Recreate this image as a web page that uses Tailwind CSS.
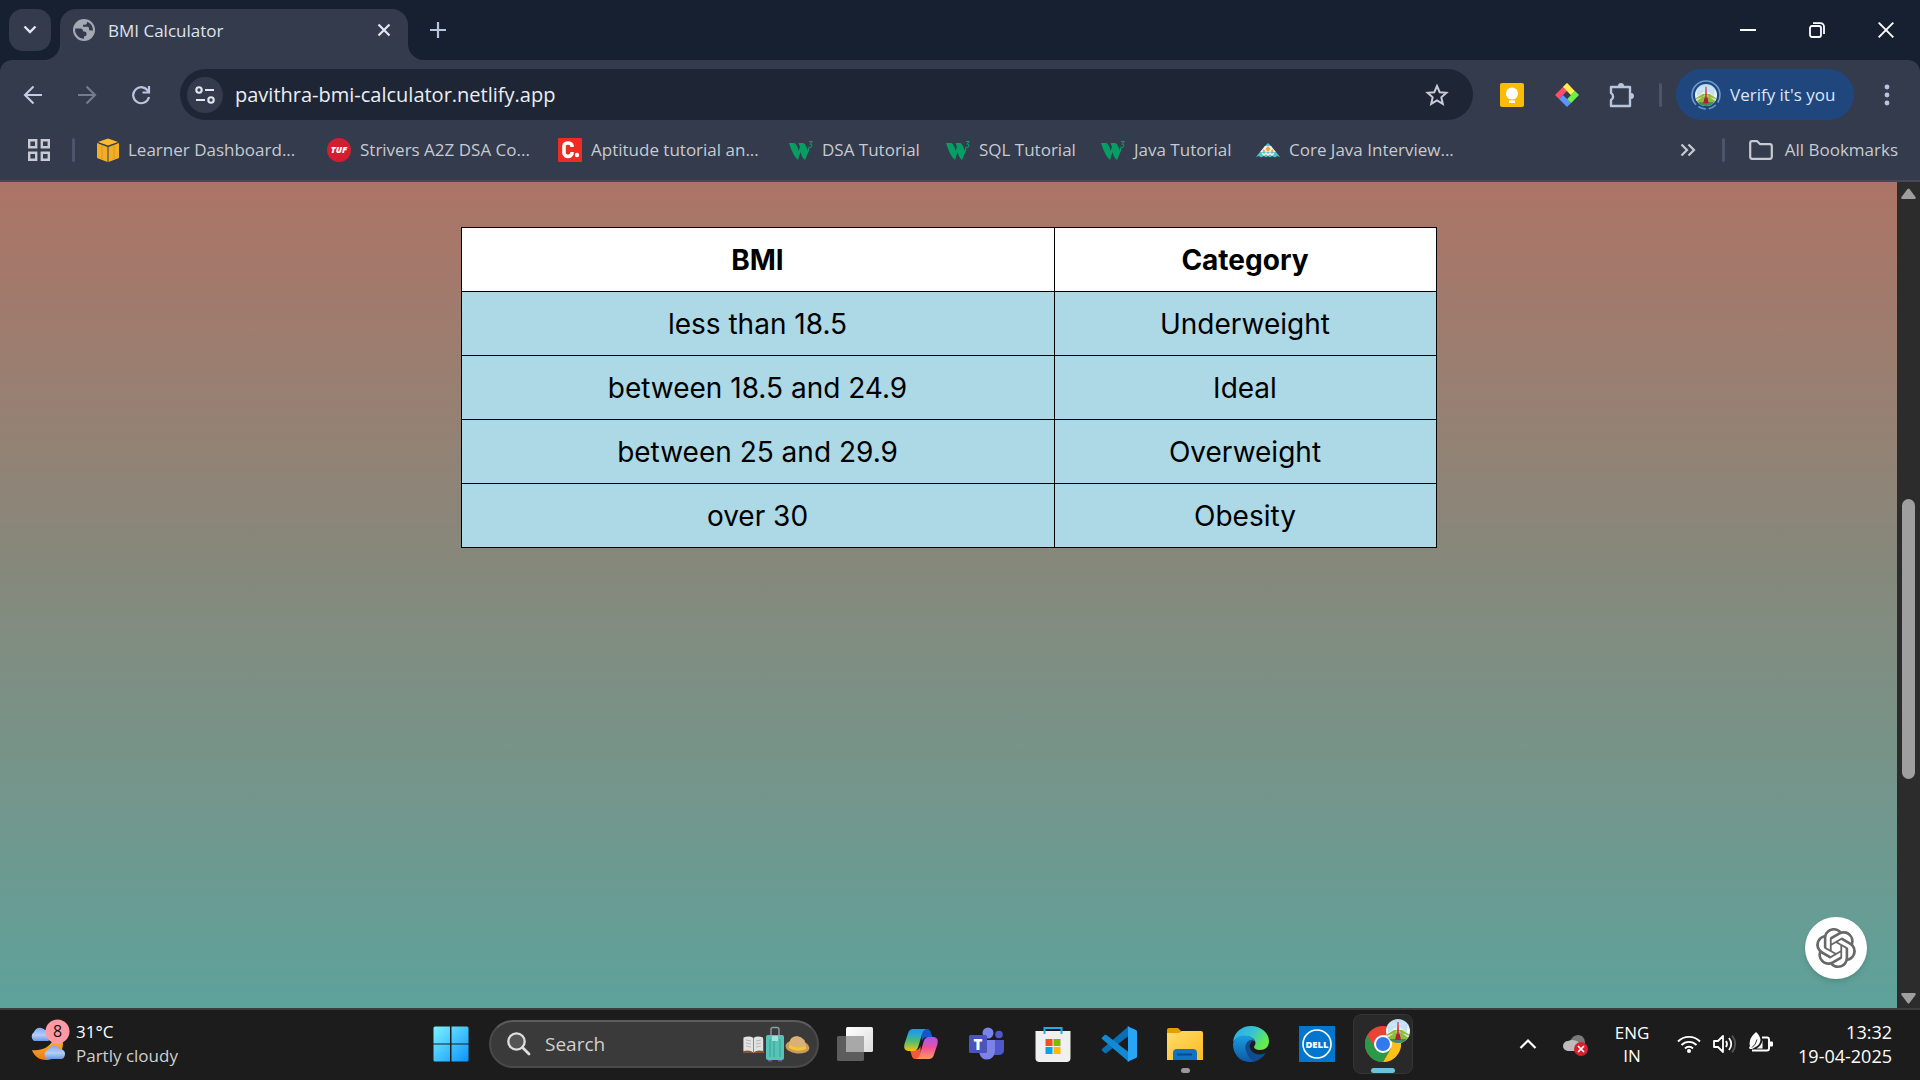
<!DOCTYPE html>
<html lang="en">
<head>
<meta charset="utf-8">
<title>BMI Calculator</title>
<script src="https://cdn.jsdelivr.net/npm/@tailwindcss/browser@4"></script>
</head>
<body class="flex h-screen flex-col overflow-hidden bg-[#172030] font-['Open_Sans','Noto_Sans',sans-serif] text-[17px] leading-6">

<!-- shared symbols -->
<svg width="0" height="0" class="absolute" aria-hidden="true">
  <defs>
    <linearGradient id="sky" x1="0" y1="0" x2="0" y2="1"><stop offset="0" stop-color="#b4d9ee"/><stop offset=".5" stop-color="#eef6fb"/></linearGradient>
    <clipPath id="disc"><circle cx="12" cy="12" r="12"/></clipPath>
  </defs>
  <symbol id="avatar" viewBox="0 0 24 24">
    <g clip-path="url(#disc)">
      <rect width="24" height="24" fill="url(#sky)"/>
      <path d="M12 6 2 14V7zM12 6l9 8V5z" fill="#c4e0f1"/>
      <path d="M0 16 8 11h8l8 5v8H0z" fill="#8dbb3c"/>
      <path d="M0 20 11 12h2l11 8v-3L13 13h-2L0 17z" fill="#dfe8d2"/>
      <path d="M4 20h16v4H4z" fill="#3f8a68"/>
      <path d="M11.400 3h1.200l.4 11 1.500 5h-5l1.500-5z" fill="#d9323c"/>
      <path d="M10.500 15h3l1.500 6H9z" fill="#b01e38"/>
    </g>
  </symbol>
  <symbol id="w3" viewBox="0 0 24 20">
    <path d="M0 3h5.500q3 2 4 8l1.500-4-1.500-4h5q3 2 4 8l1-4.500 1 3-4.500 10.500q-3-2-4.500-8L9 20Q4 16 0 3z" fill="#059f64"/>
    <path d="M20 1.500h3l-1.700 2.500c1.800.2 2 1.800 1 2.800-.8.700-1.800.6-2.500 0" fill="none" stroke="#059f64" stroke-width="1.100"/>
  </symbol>
</svg>

<!-- tab strip -->
<header class="flex h-[60px] shrink-0 items-start text-[#dfe3ec]">
  <button aria-label="Search tabs" class="mt-[9px] ml-[9px] flex size-[42px] items-center justify-center rounded-[14px] bg-[#333b4d]">
    <svg width="14" height="10" viewBox="0 0 14 10" fill="none" stroke="#e3e6ee" stroke-width="2.400"><path d="M1.500 1.500 7 7l5.500-5.500"/></svg>
  </button>
  <div class="relative mt-[9px] ml-[9px] flex h-[51px] w-[348px] items-center rounded-t-2xl bg-[#333b4d] pb-[9px] pl-[13px] pr-4">
    <svg class="absolute bottom-0 -left-4" width="16" height="16" viewBox="0 0 16 16"><path d="M16 0v16H0A16 16 0 0 0 16 0z" fill="#333b4d"/></svg>
    <svg class="absolute bottom-0 -right-4" width="16" height="16" viewBox="0 0 16 16"><path d="M0 0v16h16A16 16 0 0 1 0 0z" fill="#333b4d"/></svg>
    <svg width="22" height="22" viewBox="0 0 22 22"><circle cx="11" cy="11" r="11" fill="#a5a9b2"/><path d="M12.500 2.300 10 4.500q-1 1-.5 2 .5 1.200 2 1.200h2q2 0 2 2v1.800q0 1 1 1.200l2.500.5q1-2.200.5-4.500-1-5-7-6.400z" fill="#333b4d" opacity="0"/><path d="M2.200 9.500h5.300q2 0 2.500 2l.2 1h1.300q2 0 2 2v1.200q0 1-1 1.300l-1.500.5v2.200Q5 19.500 2.700 14 1.800 11.500 2.200 9.500z" fill="#333b4d"/><path d="M14 2.700v1.100q0 2-2 2h-2v2h4.500q1.500 0 1.500 1.500v2h1.800l2 .8Q20.500 5 14 2.700z" fill="#333b4d"/></svg>
    <span class="ml-[13px] flex-1 pt-[2px]">BMI Calculator</span>
    <button aria-label="Close tab"><svg width="16" height="16" viewBox="0 0 16 16" stroke="#e3e6ee" stroke-width="2.200"><path d="M2.500 2.500l11 11M13.500 2.500l-11 11"/></svg></button>
  </div>
  <button aria-label="New tab" class="mt-[21px] ml-[21px]"><svg width="18" height="18" viewBox="0 0 18 18" stroke="#b9c5de" stroke-width="2.200"><path d="M9 1v16M1 9h16"/></svg></button>
  <div class="ml-auto flex h-full items-center">
    <button aria-label="Minimize" class="flex w-[69px] justify-center"><svg width="16" height="16" viewBox="0 0 16 16" stroke="#fff" stroke-width="2"><path d="M0 8h16"/></svg></button>
    <button aria-label="Restore" class="flex w-[69px] justify-center"><svg width="16" height="16" viewBox="0 0 16 16" fill="none" stroke="#fff" stroke-width="1.800"><rect x="1" y="4" width="11" height="11" rx="2"/><path d="M4 1.200h7.500A3.500 3.500 0 0 1 15 4.700V12"/></svg></button>
    <button aria-label="Close" class="flex w-[69px] justify-center"><svg width="16" height="16" viewBox="0 0 16 16" stroke="#fff" stroke-width="1.900"><path d="M.7.7l14.600 14.600M15.300.7.7 15.300"/></svg></button>
  </div>
</header>

<!-- toolbar -->
<nav class="flex h-[69px] shrink-0 items-center rounded-t-xl bg-[#333b4d] pr-[24px] pl-[6px]">
  <button aria-label="Back" class="flex w-[54px] justify-center"><svg width="20" height="20" viewBox="0 0 20 20" fill="none" stroke="#c3cde0" stroke-width="2.100"><path d="M19 10H2M10.500 1.500 2 10l8.500 8.500"/></svg></button>
  <button aria-label="Forward" class="flex w-[54px] justify-center"><svg width="20" height="20" viewBox="0 0 20 20" fill="none" stroke="#757c8b" stroke-width="2.100"><path d="M1 10h17M9.500 1.500 18 10l-8.500 8.500"/></svg></button>
  <button aria-label="Reload" class="flex w-[54px] justify-center"><svg width="20" height="20" viewBox="0 0 20 20" fill="none" stroke="#b9c5de" stroke-width="2.200"><path d="M17.300 6.500A8 8 0 1 0 18 12"/><path d="M18 1v6.500h-6.500"/></svg></button>
  <div class="ml-3 flex h-[51px] flex-1 items-center rounded-full bg-[#1e2636] pr-6 pl-[7px]">
    <button aria-label="Site information" class="flex size-9 items-center justify-center rounded-full bg-[#333b4d]"><svg width="20" height="20" viewBox="0 0 20 20" fill="none" stroke="#e3e6ee" stroke-width="2.100"><circle cx="4" cy="5" r="2.700"/><path d="M10 5h9M1 15h9"/><circle cx="16" cy="15" r="2.700"/></svg></button>
    <input type="text" aria-label="Address" value="pavithra-bmi-calculator.netlify.app" class="ml-3 h-8 min-w-0 flex-1 bg-transparent text-[20px] text-[#eceef3] outline-none">
    <button aria-label="Bookmark this page"><svg width="24" height="24" viewBox="0 0 24 24" fill="none" stroke="#c7cbd3" stroke-width="2"><path d="M12 3l2.700 6.200 6.700.6-5.100 4.500 1.500 6.600L12 17.400l-5.800 3.500 1.500-6.600L2.600 9.800l6.700-.6z"/></svg></button>
  </div>
  <button aria-label="Keep notes" class="ml-[27px]"><svg width="24" height="24" viewBox="0 0 24 24"><rect width="24" height="24" rx="2" fill="#fbbc04"/><circle cx="12" cy="10.500" r="6" fill="#fff"/><path d="M8.500 14h7v2h-7zM9 17.500h6V20H9z" fill="#fff"/></svg></button>
  <button aria-label="Color tool" class="ml-[31px]"><svg width="24" height="24" viewBox="0 0 24 24"><path d="M12 0l4 4-8.500 8.500L4 16l-4-4z" fill="#ff4d6b"/><path d="M12 0l8 8.200-4 4L8 4z" fill="#fff04a"/><path d="M20 8l4 4-8 8.200-4-4z" fill="#6bf04c"/><path d="M12 24l-8-8 4-4 8 8z" fill="#5b93ff"/></svg></button>
  <button aria-label="Extensions" class="ml-[30px]"><svg width="26" height="26" viewBox="0 0 26 26" fill="none" stroke="#b9c5de" stroke-width="2.400" stroke-linejoin="round"><path d="M2 5h19v19H2v-6a4 4 0 0 0 0-7z"/><path d="M9 4a3 3 0 0 1 6 0zM22 11a3 3 0 0 1 0 6z" fill="#b9c5de" stroke="none"/></svg></button>
  <span class="ml-[24px] h-6 w-[3px] rounded bg-[#4b566c]"></span>
  <button class="ml-[14px] flex h-[51px] w-[178px] items-center rounded-full bg-[#1f477d] pl-[15px] text-[#dce6fb]">
    <svg width="30" height="30" viewBox="0 0 30 30"><circle cx="15" cy="15" r="14" fill="none" stroke="#6e97d0" stroke-width="1.600" stroke-dasharray="8 3 8 3 8 3 55 0"/><use href="#avatar" x="4" y="4" width="22" height="22"/></svg>
    <span class="ml-[9px]">Verify it's you</span>
  </button>
  <button aria-label="Menu" class="ml-6 flex w-[18px] justify-center"><svg width="6" height="24" viewBox="0 0 6 24" fill="#b9c5de"><circle cx="3" cy="4" r="2.400"/><circle cx="3" cy="12" r="2.400"/><circle cx="3" cy="20" r="2.400"/></svg></button>
</nav>

<!-- bookmarks bar -->
<nav class="flex h-[53px] shrink-0 items-center border-b-2 border-[#454954] bg-[#333b4d] pr-[22px] pb-[9px] pl-7 text-[#c7cad1]">
  <button aria-label="Apps"><svg width="22" height="22" viewBox="0 0 22 22" fill="none" stroke="#c7cad1" stroke-width="2.400"><path d="M1.200 1.200h7v7h-7zM13.800 1.200h7v7h-7zM1.200 13.800h7v7h-7zM13.800 13.800h7v7h-7z"/></svg></button>
  <span class="ml-[22px] h-6 w-[3px] rounded bg-[#4b566c]"></span>
  <a href="#" class="ml-[21px] flex w-[231px] items-center gap-2"><svg width="24" height="24" viewBox="0 0 24 24"><path d="M1 5l10.500 4v15L1 20zM23 5 12.500 9v15L23 20z" fill="#f2ae27"/><path d="M2 4 12 .5 22 4 12 7.500z" fill="#ffb92c"/><path d="M6 7v14.500M18 7v14.500" stroke="#dc9818"/></svg><span>Learner Dashboard...</span></a>
  <a href="#" class="flex w-[231px] items-center gap-[9px]"><svg width="24" height="24" viewBox="0 0 24 24"><circle cx="12" cy="12" r="12" fill="#d31e32"/><text x="12" y="15" font-size="9" font-weight="800" font-style="italic" fill="#fff" text-anchor="middle">TUF</text></svg><span>Strivers A2Z DSA Co...</span></a>
  <a href="#" class="flex w-[231px] items-center gap-[9px]"><svg width="24" height="24" viewBox="0 0 24 24"><rect width="24" height="24" rx="1" fill="#ee2c24"/><path d="M14 9V8c0-4-8-4-8 0v7c0 4.500 8 4.500 8 0v-1" fill="none" stroke="#fff" stroke-width="3.600"/><circle cx="19" cy="17" r="2.200" fill="#fff"/></svg><span>Aptitude tutorial an...</span></a>
  <a href="#" class="flex w-[157px] items-center gap-[9px]"><svg width="24" height="20"><use href="#w3"/></svg><span>DSA Tutorial</span></a>
  <a href="#" class="flex w-[155px] items-center gap-[9px]"><svg width="24" height="20"><use href="#w3"/></svg><span>SQL Tutorial</span></a>
  <a href="#" class="flex w-[155px] items-center gap-[9px]"><svg width="24" height="20"><use href="#w3"/></svg><span>Java Tutorial</span></a>
  <a href="#" class="flex items-center gap-[9px]"><svg width="24" height="24" viewBox="0 0 24 24"><path d="M12 5l4 4H8z" fill="#4fc4c9"/><path d="M9 8h6l5 6H4z" fill="#f6f1e6"/><path d="M12 8l2.500 3L12 14l-2.500-3zM7.500 11l2 2.500-3 1zM16.500 11l-2 2.500 3 1z" fill="#f5a13c"/><path d="M4 14h16l4 5-3-1-2 1.500-3-1.500-2 1.500-2-1.500-2 1.500-2-1.500-3 1.500-2-1.500-3 1z" fill="#4fc4c9"/><path d="M6 15l2 2 2-2 2 2 2-2 2 2 2-2" fill="none" stroke="#f6f1e6" stroke-width="1.500"/></svg><span>Core Java Interview...</span></a>
  <button aria-label="More bookmarks" class="ml-auto"><svg width="16" height="14" viewBox="0 0 16 14" fill="none" stroke="#c7cad1" stroke-width="2.200"><path d="M1.500 1.500 7 7l-5.500 5.500M8.500 1.500 14 7l-5.500 5.500"/></svg></button>
  <span class="ml-[26px] h-6 w-[3px] rounded bg-[#4b566c]"></span>
  <a href="#" class="ml-6 flex items-center gap-3"><svg width="24" height="20" viewBox="0 0 24 20" fill="none" stroke="#c7cad1" stroke-width="2.200" stroke-linejoin="round"><path d="M1.200 3.200q0-2 2-2h5l3 3h9.600q2 0 2 2v10.600q0 2-2 2H3.200q-2 0-2-2z"/></svg><span>All Bookmarks</span></a>
</nav>

<!-- page -->
<div class="flex min-h-0 flex-1">
  <main class="relative flex-1 bg-linear-to-b from-[#ac7466] via-[#87877a] via-44% to-[#5ca29b] pt-[45px] font-[Inter,sans-serif] text-[28px] text-black">
    <table class="mx-auto w-[976px] table-fixed border-collapse text-center">
      <colgroup><col class="w-[593px]"><col></colgroup>
      <thead class="bg-white">
        <tr class="h-16"><th scope="col" class="border border-black font-bold">BMI</th><th scope="col" class="border border-black font-bold">Category</th></tr>
      </thead>
      <tbody class="bg-[#add8e6]">
        <tr class="h-16"><td class="border border-black">less than 18.5</td><td class="border border-black">Underweight</td></tr>
        <tr class="h-16"><td class="border border-black">between 18.5 and 24.9</td><td class="border border-black">Ideal</td></tr>
        <tr class="h-16"><td class="border border-black">between 25 and 29.9</td><td class="border border-black">Overweight</td></tr>
        <tr class="h-16"><td class="border border-black">over 30</td><td class="border border-black">Obesity</td></tr>
      </tbody>
    </table>
    <button aria-label="Open assistant" class="absolute right-[30px] bottom-[29px] flex size-[62px] items-center justify-center rounded-full bg-white shadow-md">
      <svg width="40" height="40" viewBox="0 0 24 24" fill="#686868"><path d="M22.2819 9.8211a5.9847 5.9847 0 0 0-.5157-4.9108 6.0462 6.0462 0 0 0-6.5098-2.9A6.0651 6.0651 0 0 0 4.9807 4.1818a5.9847 5.9847 0 0 0-3.9977 2.9 6.0462 6.0462 0 0 0 .7427 7.0966 5.98 5.98 0 0 0 .511 4.9107 6.051 6.051 0 0 0 6.5146 2.9001A5.9847 5.9847 0 0 0 13.2599 24a6.0557 6.0557 0 0 0 5.7718-4.2058 5.9894 5.9894 0 0 0 3.9977-2.9001 6.0557 6.0557 0 0 0-.7475-7.0729zm-9.022 12.6081a4.4755 4.4755 0 0 1-2.8764-1.0408l.1419-.0804 4.7783-2.7582a.7948.7948 0 0 0 .3927-.6813v-6.7369l2.02 1.1686a.071.071 0 0 1 .038.052v5.5826a4.504 4.504 0 0 1-4.4945 4.4944zm-9.6607-4.1254a4.4708 4.4708 0 0 1-.5346-3.0137l.142.0852 4.783 2.7582a.7712.7712 0 0 0 .7806 0l5.8428-3.3685v2.3324a.0804.0804 0 0 1-.0332.0615L9.74 19.9502a4.4992 4.4992 0 0 1-6.1408-1.6464zM2.3408 7.8956a4.485 4.485 0 0 1 2.3655-1.9728V11.6a.7664.7664 0 0 0 .3879.6765l5.8144 3.3543-2.0201 1.1685a.0757.0757 0 0 1-.071 0l-4.8303-2.7865A4.504 4.504 0 0 1 2.3408 7.872zm16.5963 3.8558L13.1038 8.364 15.1192 7.2a.0757.0757 0 0 1 .071 0l4.8303 2.7913a4.4944 4.4944 0 0 1-.6765 8.1042v-5.6772a.79.79 0 0 0-.407-.667zm2.0107-3.0231l-.142-.0852-4.7735-2.7818a.7759.7759 0 0 0-.7854 0L9.409 9.2297V6.8974a.0662.0662 0 0 1 .0284-.0615l4.8303-2.7866a4.4992 4.4992 0 0 1 6.6802 4.66zM8.3065 12.863l-2.02-1.1638a.0804.0804 0 0 1-.038-.0567V6.0742a4.4992 4.4992 0 0 1 7.3757-3.4537l-.142.0805L8.704 5.459a.7948.7948 0 0 0-.3927.6813zm1.0976-2.3654l2.602-1.4998 2.6069 1.4998v2.9994l-2.5974 1.4997-2.6067-1.4997Z"/></svg>
    </button>
  </main>
  <div class="flex w-[23px] flex-col items-center bg-[#2c2c2c] pt-[5px] pb-[3px]">
    <svg class="shrink-0" width="15" height="14" viewBox="0 0 15 14" fill="#9f9f9f"><path d="M6.500 2q1-1 2 0l6 8q.8 2-1 2h-12q-1.800 0-1-2z"/></svg>
    <div class="w-full grow-[298]"></div>
    <div class="w-[13px] grow-[280] rounded-full bg-[#9f9f9f]"></div>
    <div class="w-full grow-[212]"></div>
    <svg class="shrink-0" width="15" height="14" viewBox="0 0 15 14" fill="#9f9f9f"><path d="M6.500 12q1 1 2 0l6-8q.8-2-1-2h-12q-1.800 0-1 2z"/></svg>
  </div>
</div>

<!-- taskbar -->
<footer class="flex h-[72px] shrink-0 items-center border-t-2 border-[#3c3c3c] bg-[#1c1c1c] pb-[2px] text-white">
  <div class="flex w-[421px] shrink-0 items-center pl-7">
    <svg class="mb-[9px]" width="42" height="42" viewBox="0 0 42 42">
      <defs><linearGradient id="cl" x1="0" y1="0" x2="0" y2="1"><stop offset="0" stop-color="#82a8ee"/><stop offset=".55" stop-color="#b4cdfa"/><stop offset="1" stop-color="#6d97e2"/></linearGradient><linearGradient id="mn" x1="0" y1="0" x2="0" y2="1"><stop offset="0" stop-color="#fbb92c"/><stop offset="1" stop-color="#ee7a1a"/></linearGradient></defs>
      <path d="M34 19c4 12-5 22-16 22-7 0-12-4-14-10 9 1 17-2 21-10z" fill="url(#mn)"/>
      <path d="M6 22a5.500 5.500 0 0 1 0-9 6.500 6.500 0 0 1 11-2c4 0 6 3 6 6 0 4-2 5-4 5z" fill="url(#cl)"/>
      <path d="M19 40a5 5 0 0 1 1-9 6 6 0 0 1 11-1c4 0 6 2 6 5s-2 5-4 5z" fill="url(#cl)"/>
      <circle cx="29.500" cy="12.500" r="12" fill="#ff99a4"/>
      <text x="29.500" y="18" font-size="16" text-anchor="middle" fill="#111">8</text>
    </svg>
    <div class="ml-[6px]"><div>31°C</div><div class="text-[#cfcfcf]">Partly cloudy</div></div>
  </div>

  <div class="flex items-center">
    <button aria-label="Start" class="flex w-[60px] justify-center"><svg width="36" height="36" viewBox="0 0 36 36"><defs><linearGradient id="win" gradientUnits="userSpaceOnUse" x1="0" y1="0" x2="36" y2="36"><stop offset="0" stop-color="#7df4ff"/><stop offset="1" stop-color="#0a93fb"/></linearGradient></defs><path d="M2 .5h15v17H.500V2Q.500.500 2 .500zM18.500.500H34Q35.500.500 35.500 2v15.500h-17zM.500 18.500H17v17H2Q.500 35.500.500 34zM18.500 18.500h17V34q0 1.500-1.500 1.500H18.500z" fill="url(#win)"/></svg></button>
    <label class="ml-2 flex h-12 w-[330px] items-center rounded-full border-2 border-[#4a4a4a] border-t-[#5c5c5c] bg-[#3a3a3a] pr-[7px] pl-4">
      <svg width="24" height="24" viewBox="0 0 24 24" fill="none" stroke="#dedede"><circle cx="9.500" cy="9.500" r="8.200" fill="#555" stroke-width="2.300"/><path d="M15.500 15.500l6.500 6.500" stroke-width="2.800" stroke-linecap="round"/></svg>
      <input type="search" aria-label="Search" placeholder="Search" class="ml-[14px] w-20 min-w-0 flex-1 bg-transparent text-[19px] outline-none placeholder:text-[#d0d0d0]">
      <svg width="68" height="36" viewBox="0 0 68 36">
        <path d="M1 13v14h21V13z" fill="#8a5230"/><path d="M1.500 11.500q6-2 10 .5 3.500-2.500 9.500-.5V25q-6-1.500-9.500 1.500Q8 23.500 1.500 25z" fill="#e2e2e2"/><path d="M11.500 12v14" stroke="#8a8a8a"/><path d="M4 14l5 1M4 17l5 1M4 20l5 1M14 15l5-1M14 18l5-1M14 21l5-1" stroke="#a9a9a9" stroke-width=".8"/>
        <path d="M29 10V3.500q0-2 2-2h4q2 0 2 2V10" fill="none" stroke="#8f9caa" stroke-width="1.400"/><rect x="24" y="9" width="18" height="25" rx="2" fill="#58c4b8"/><path d="M28 13v18M32 15v16M38 13v18" stroke="#3aa79c" stroke-width="1.200"/><path d="M30 10h6v5h-6z" fill="#a8e0d8"/><path d="M26 34h4v1.500h-4zM36 34h4v1.500h-4z" fill="#6b55b0"/>
        <ellipse cx="55.500" cy="21" rx="12" ry="6.500" fill="#c99b5c" transform="rotate(6 55.500 21)"/><path d="M47 20q0-10 8-10 9 1 9 12-8 4-17-2z" fill="#d9b177"/><path d="M47 18.500q8 5.500 17 1.500v3q-9 4-17-1z" fill="#f5c72f"/>
      </svg>
    </label>
    <div class="ml-[6px] flex items-center gap-[6px]">
      <button aria-label="Task view" class="flex w-[60px] justify-center"><svg width="36" height="34" viewBox="0 0 36 34"><defs><linearGradient id="tv" x1="0" y1="0" x2="1" y2="1"><stop offset="0" stop-color="#fff"/><stop offset="1" stop-color="#dcdcdc"/></linearGradient></defs><rect x="9" width="27" height="25" rx="1.500" fill="url(#tv)"/><rect y="9" width="27" height="25" rx="1.500" fill="#5d5d5d"/><path d="M9 9h18v16H9z" fill="#a8a8a8"/></svg></button>
      <button aria-label="Copilot" class="flex w-[60px] justify-center"><svg width="36" height="34" viewBox="0 0 36 34"><defs><linearGradient id="c1" x1="0" y1="0" x2="0" y2="1"><stop offset=".1" stop-color="#1a9cf0"/><stop offset=".55" stop-color="#4dbb76"/><stop offset="1" stop-color="#f5c40a"/></linearGradient><linearGradient id="c2" x1="0" y1="0" x2="0" y2="1"><stop offset="0" stop-color="#a655f2"/><stop offset=".5" stop-color="#f0529b"/><stop offset="1" stop-color="#ff9a5c"/></linearGradient></defs><path d="M18 2h6q3 0 4 4l1.500 4h-6q-3 0-4.500 4z" fill="#1557c9"/><path d="M18 32h-6q-2.500 0-3.500-4L7 23h6q3 0 4.500-4z" fill="#f2583a"/><path d="M10 2h13q-3 1-4 5l-3.500 12q-1.500 5-5 5H5q-5-1-3.500-7L5.500 5Q7 2 10 2z" fill="url(#c1)"/><path d="M26 32H13q3-1 4-5l3.500-12q1.500-5 5-5H31q5 1 3.500 7l-4 12Q29 32 26 32z" fill="url(#c2)"/></svg></button>
      <button aria-label="Teams" class="flex w-[60px] justify-center"><svg width="36" height="36" viewBox="0 0 36 36"><circle cx="30" cy="8.500" r="3.800" fill="#5059c9"/><path d="M24 14h11v10q0 5-6 5h-5z" fill="#5059c9"/><circle cx="19" cy="7" r="5.500" fill="#7b83eb"/><path d="M11 14h15v11q-1 8.500-8 8.500-6 0-7.500-6z" fill="#7b83eb"/><rect y="9" width="18" height="18" rx="1.500" fill="#4b53bc"/><text x="9" y="23.500" font-size="15" font-weight="800" fill="#fff" text-anchor="middle">T</text></svg></button>
      <button aria-label="Microsoft Store" class="flex w-[60px] justify-center"><svg width="36" height="36" viewBox="0 0 36 36"><path d="M.500 5h35v27q0 4-4 4h-27q-4 0-4-4z" fill="#f0f0f0"/><path d="M9.500 8V2h17v6" fill="none" stroke="#28a8e8" stroke-width="2"/><path d="M10.500 13h7v7h-7z" fill="#f25022"/><path d="M18.500 13h7v7h-7z" fill="#7fba00"/><path d="M10.500 21h7v7h-7z" fill="#00a4ef"/><path d="M18.500 21h7v7h-7z" fill="#ffb900"/></svg></button>
      <button aria-label="Visual Studio Code" class="flex w-[60px] justify-center"><svg width="36" height="36" viewBox="0 0 36 36"><path d="M1 24.500 3.500 27q1 .7 2 0L28 9.500V0L1 23q-.7.800 0 1.500z" fill="#0b6fb5"/><path d="M1 11.500 3.500 9q1-.7 2 0L28 26.500V36L1 13q-.7-.8 0-1.500z" fill="#1389d3"/><path d="M26 0l9 4q1 .5 1 1.500v25q0 1-1 1.500l-9 4q1-.6 1-2V2q0-1.400-1-2z" fill="#29a5f5"/></svg></button>
      <button aria-label="File Explorer" class="relative flex w-[60px] justify-center"><svg width="36" height="36" viewBox="0 0 36 36"><defs><linearGradient id="fe" x1="0" y1="0" x2="1" y2="1"><stop offset="0" stop-color="#ffdc6b"/><stop offset="1" stop-color="#fdbb20"/></linearGradient></defs><path d="M0 4q0-2 2-2h9l4 4v4H0z" fill="#e0a000"/><path d="M0 7h12l3-2h19q2 0 2 2v27H0z" fill="url(#fe)"/><path d="M6 34v-7q0-4 4-4h16q4 0 4 4v7z" fill="#1173c4"/><path d="M10 28.500h15" stroke="#07498d" stroke-width="2"/></svg><span class="absolute -bottom-[11px] h-[5px] w-[9px] rounded-full bg-[#999]"></span></button>
      <button aria-label="Edge" class="flex w-[60px] justify-center"><svg width="36" height="36" viewBox="0 0 36 36"><defs><linearGradient id="eg" x1="0" y1="0" x2="1" y2=".5"><stop offset="0" stop-color="#2aa8e0"/><stop offset=".5" stop-color="#35c1d8"/><stop offset="1" stop-color="#66eb4a"/></linearGradient><linearGradient id="eb" x1="0" y1="0" x2="0" y2="1"><stop offset="0" stop-color="#1b9de2"/><stop offset="1" stop-color="#0c59a4"/></linearGradient></defs><path d="M0 16C1 6 9 0 18 0c10 0 18 7 18 15 0 6-4 9-9 9-4 0-6-1.500-6-3 0-1 1.500-2 1.500-4C22 12 17 10 12 10 6 10 2 13 0 16z" fill="url(#eg)"/><path d="M0 18C1 12 6 9.500 11 9.500c6 0 10 3 11 6-7-4-11 5-6 12 3 5 7 7 6 8-13 3-22-6-22-17.500z" fill="url(#eb)"/><path d="M21 14C14 12 11 20 13 25c2 6 5 9 8 10.500 5-1 9-4 12-8.500-7 3-14 1-16-5-1-3 1-6 4-8z" fill="#124c8e"/></svg></button>
      <button aria-label="Dell" class="flex w-[60px] justify-center"><svg width="36" height="36" viewBox="0 0 36 36"><rect width="36" height="36" fill="#0076ce"/><circle cx="18" cy="18" r="14" fill="none" stroke="#fff" stroke-width="1.600"/><text x="18" y="21.500" font-size="9.500" font-weight="800" fill="#fff" text-anchor="middle">DELL</text></svg></button>
      <button aria-label="Chrome" class="relative flex h-[60px] w-[60px] items-center justify-center rounded-lg border border-[#353535] bg-[#292929]">
        <svg width="36" height="36" viewBox="0 0 36 36"><circle cx="18" cy="18" r="18" fill="#ea4335"/><path d="M18 9h15.600A18 18 0 0 1 18 36l7.800-13.500z" fill="#fbc116"/><path d="M2.400 9 10.200 22.500 18 27l7.800-4.500L18 36A18 18 0 0 1 2.400 9z" fill="#2b9a48"/><circle cx="18" cy="18" r="9" fill="#fff"/><circle cx="18" cy="18" r="7" fill="#3079ee"/></svg>
        <svg class="absolute top-1 right-[2px]" width="24" height="24"><use href="#avatar"/></svg>
        <span class="absolute bottom-0 h-[5px] w-6 rounded-full bg-[#6cc3d9]"></span>
      </button>
    </div>
  </div>

  <div class="ml-auto flex items-center pr-7">
    <button aria-label="Show hidden icons"><svg width="18" height="12" viewBox="0 0 18 12" fill="none" stroke="#fff" stroke-width="2.200"><path d="M1.500 10 9 2.500l7.500 7.500"/></svg></button>
    <svg class="ml-[26px]" width="26" height="24" viewBox="0 0 26 24"><path d="M7 9q3-6 8-6 6 0 7 7v4H7z" fill="#7a7a7a"/><path d="M5 19a5 5 0 0 1 0-10q6-3 12 2v8z" fill="#bdbdbd"/><circle cx="18" cy="17" r="7" fill="#d6202f"/><path d="M15 14l6 6M21 14l-6 6" stroke="#fff" stroke-width="1.700"/></svg>
    <button class="ml-[23px] w-[40px] text-center leading-[23px]">ENG<br>IN</button>
    <button aria-label="Network, volume and battery" class="ml-[25px] flex gap-3">
      <svg width="24" height="24" viewBox="0 0 24 24" fill="none" stroke="#fff" stroke-width="1.900"><path d="M1 9.500a15.500 15.500 0 0 1 22 0M4.500 13a10.600 10.600 0 0 1 15 0M8 16.500a5.600 5.600 0 0 1 8 0"/><circle cx="12" cy="19" r="2" fill="#fff" stroke="none"/></svg>
      <svg width="24" height="24" viewBox="0 0 24 24" fill="none" stroke="#fff" stroke-width="1.800" stroke-linejoin="round"><path d="M1 9h4l5-5v16l-5-5H1z"/><path d="M13 9q2 3 0 6M16 6q4.500 6 0 12"/><path d="M19 3.500q6.500 8.500 0 17" stroke="#555"/></svg>
      <svg width="24" height="24" viewBox="0 0 24 24"><path d="M13 5.500h5q2 0 2 2v9q0 2-2 2H3" fill="none" stroke="#fff" stroke-width="1.900"/><path d="M20.500 9.500H23q1 0 1 1v3q0 1-1 1h-2.500z" fill="#fff"/><path d="M7 0q4 3.500 4.500 8-.5 5-5 7L3 17H1l-1-1 1-2Q-1 7 7 0z" fill="#fff"/><path d="M13.500 8v8.500H7.500q5-2.500 6-8.500z" fill="#fff"/><path d="M3 15.500q4-3 5-8" fill="none" stroke="#1c1c1c" stroke-width=".9"/></svg>
    </button>
    <time class="ml-[25px] text-right text-[18px]">13:32<br>19-04-2025</time>
  </div>
</footer>
</body>
</html>
